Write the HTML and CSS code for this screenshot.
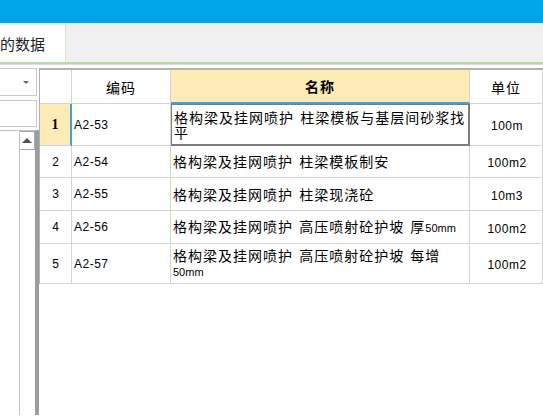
FILE: index.html
```html
<!DOCTYPE html>
<html lang="zh-CN">
<head>
    <meta charset="UTF-8">
    <title>定额数据</title>
    <link rel="stylesheet" href="styles.css">
</head>
<body>

    <!-- Title bar -->
    <div class="titlebar"></div>

    <!-- Tabs -->
    <div class="tabbar">
        <div class="tab">的数据</div>
    </div>

    <div class="main">

        <!-- Left side panel -->
        <div class="side">
            <div class="combo"><span class="combo-arrow"></span></div>
            <div class="textbox"></div>
            <div class="listbox">
                <div class="list-body"></div>
                <div class="vscroll">
                    <div class="scroll-up"><span class="up-arrow"></span></div>
                </div>
            </div>
        </div>

        <!-- Data grid -->
        <div class="grid">
            <div class="cell hdr rowhdr"></div>
            <div class="cell hdr center">编码</div>
            <div class="cell hdr center active-col">名称</div>
            <div class="cell hdr center">单位</div>

            <div class="cell rowhdr current">1</div>
            <div class="cell code">A2-53</div>
            <div class="cell name editing"><p>格构梁及挂网喷护 柱梁模板与基层间砂浆找平</p></div>
            <div class="cell unit">100m</div>

            <div class="cell rowhdr">2</div>
            <div class="cell code">A2-54</div>
            <div class="cell name"><p>格构梁及挂网喷护 柱梁模板制安</p></div>
            <div class="cell unit">100m2</div>

            <div class="cell rowhdr">3</div>
            <div class="cell code">A2-55</div>
            <div class="cell name"><p>格构梁及挂网喷护 柱梁现浇砼</p></div>
            <div class="cell unit">10m3</div>

            <div class="cell rowhdr">4</div>
            <div class="cell code">A2-56</div>
            <div class="cell name"><p>格构梁及挂网喷护 高压喷射砼护坡 厚<span class="small">50mm</span></p></div>
            <div class="cell unit">100m2</div>

            <div class="cell rowhdr">5</div>
            <div class="cell code">A2-57</div>
            <div class="cell name"><p>格构梁及挂网喷护 高压喷射砼护坡 每增<br><span class="small">50mm</span></p></div>
            <div class="cell unit">100m2</div>
        </div>

    </div>

</body>
</html>
```

FILE: styles.css
```css
/* Reset */
* {
    margin: 0;
    padding: 0;
    box-sizing: border-box;
}

body {
    width: 543px;
    height: 417px;
    overflow: hidden;
    background-color: #ffffff;
    font-family: "Noto Sans CJK SC", "Liberation Sans", sans-serif;
    color: #000;
}

/* Title bar */
.titlebar {
    height: 25px;
    background-color: #00a4e9;
    border-bottom: 2px solid #dff1fb;
}

/* Tabs */
.tabbar {
    height: 39px;
    background-color: #f0f0f0;
    border-bottom: 2px solid #b6dbab;
    display: flex;
}

.tab {
    width: 66px;
    background-color: #ffffff;
    border-right: 1px solid #cfe7c6;
    font-size: 15px;
    line-height: 37px;
    padding-left: 0;
    color: #222;
}

/* Main area */
.main {
    display: flex;
    height: 351px;
    border-top: 1px solid #dcdcdc;
}

/* Side panel */
.side {
    width: 39px;
    display: flex;
    flex-direction: column;
    padding-top: 3px;
}

.combo {
    width: 37px;
    height: 28px;
    border: 1px solid #c8c8c8;
    border-left: none;
    position: relative;
}

.combo-arrow {
    position: absolute;
    left: 23px;
    top: 12px;
    border-left: 3px solid transparent;
    border-right: 3px solid transparent;
    border-top: 3px solid #6a6a6a;
}

.textbox {
    width: 37px;
    height: 27px;
    margin-top: 4px;
    border: 1px solid #c8c8c8;
    border-left: none;
}

.listbox {
    flex: 1;
    margin-top: 3px;
    display: flex;
    border-top: 1px solid #c0c0c0;
    border-right: 4px solid #9c9ca4;
}

.list-body {
    width: 19px;
}

.vscroll {
    width: 16px;
    border-left: 1px solid #c4c4c4;
}

.scroll-up {
    height: 19px;
    border: 1px solid #a8a8a8;
    border-left: none;
    display: flex;
    align-items: center;
    justify-content: center;
}

.up-arrow {
    border-left: 5px solid transparent;
    border-right: 5px solid transparent;
    border-bottom: 5px solid #505050;
}

/* Grid */
.grid {
    flex: 1;
    margin-top: 3px;
    align-self: flex-start;
    display: grid;
    grid-template-columns: 32px 99px 299px 1fr;
    grid-template-rows: 34px 42px 32px 33px 33px 40px;
    border-top: 2px solid #b4b4b4;
    border-left: 1px solid #b0b0b0;
}

.cell {
    border-right: 1px solid #d4d4d4;
    border-bottom: 1px solid #d4d4d4;
    display: flex;
    align-items: center;
    font-size: 12px;
    overflow: hidden;
}

.hdr {
    font-size: 14px;
    letter-spacing: 1px;
}

.center {
    justify-content: center;
}

.active-col {
    background-color: #ffebb5;
    font-weight: bold;
    border-bottom: 2px solid #3da2e0;
}

.rowhdr {
    justify-content: center;
    font-family: "Liberation Sans", sans-serif;
    font-size: 12px;
}

.rowhdr.current {
    background-color: #ffebb5;
    border-right: 2px solid #3da2e0;
    font-family: "Liberation Serif", serif;
    font-weight: bold;
    font-size: 14px;
}

.code {
    font-family: "Liberation Sans", sans-serif;
    letter-spacing: 0.5px;
    padding-left: 2px;
}

.name {
    padding: 0 0 0 2px;
    font-size: 14px;
    letter-spacing: 1px;
    word-spacing: 2px;
    line-height: 15px;
}

.name.editing {
    border: 2px solid #7c7c7c;
    border-top: 1px solid #7c7c7c;
    border-left: 1px solid #7c7c7c;
}

.name .small {
    font-family: "Liberation Sans", sans-serif;
    font-size: 11px;
    letter-spacing: 0;
}

.unit {
    justify-content: center;
    font-family: "Liberation Sans", sans-serif;
    letter-spacing: 0.5px;
    padding-top: 3px;
    padding-left: 2px;
}
```
